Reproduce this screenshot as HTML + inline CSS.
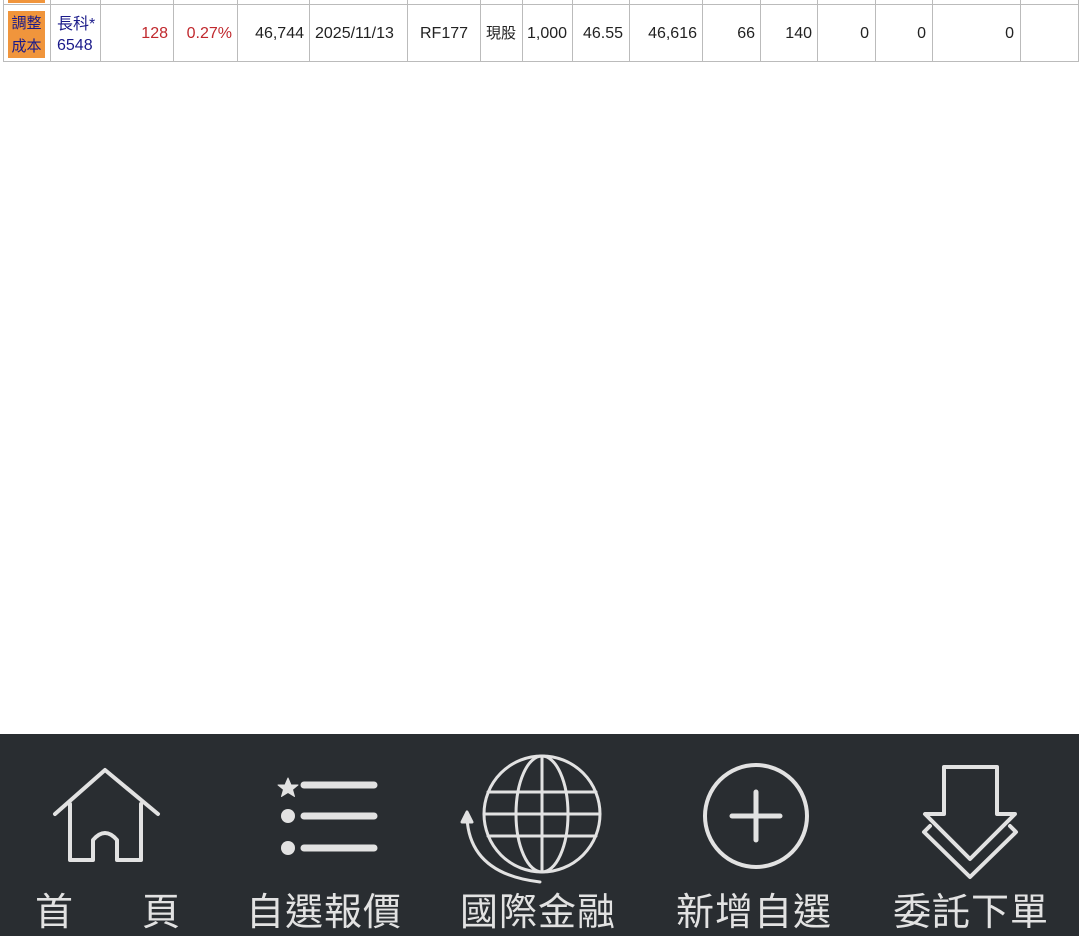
<!DOCTYPE html>
<html><head><meta charset="utf-8"><style>
body{margin:0;width:1079px;height:936px;background:#fff;position:relative;overflow:hidden;font-family:"Liberation Sans","Noto Sans CJK TC",sans-serif}
.v{position:absolute;top:0;height:62px;width:1px;background:#bbb}
.h{position:absolute;left:3px;right:0;height:1px;background:#bbb}
.c{position:absolute;top:25px;font-size:16px;color:#222;text-align:right;line-height:18px}
.nav{position:absolute;left:0;top:734px;width:1079px;height:202px;background:#292d31}
.t{position:absolute;top:886px;font-size:38px;color:#e2e2e2;line-height:46px;letter-spacing:1px;font-family:"Noto Sans CJK TC",sans-serif}
svg{position:absolute}
</style></head><body>
<div class="h" style="top:4px"></div><div class="h" style="top:61px"></div>
<div class="v" style="left:3px"></div><div class="v" style="left:50px"></div><div class="v" style="left:100px"></div><div class="v" style="left:173px"></div><div class="v" style="left:237px"></div><div class="v" style="left:309px"></div><div class="v" style="left:407px"></div><div class="v" style="left:480px"></div><div class="v" style="left:522px"></div><div class="v" style="left:572px"></div><div class="v" style="left:629px"></div><div class="v" style="left:702px"></div><div class="v" style="left:760px"></div><div class="v" style="left:817px"></div><div class="v" style="left:875px"></div><div class="v" style="left:932px"></div><div class="v" style="left:1020px"></div><div class="v" style="left:1078px"></div>
<div style="position:absolute;left:8px;top:0;width:37px;height:3px;background:#f0953c"></div>
<div style="position:absolute;left:8px;top:11px;width:37px;height:47px;background:#f0953c;font-size:15px;color:#1a1a8a;text-align:center;line-height:23px;font-family:'Noto Sans CJK TC',sans-serif">調整<br>成本</div>
<div style="position:absolute;left:57px;top:14px;font-size:16px;color:#1a1a8a;line-height:21px;font-family:'Liberation Sans','Noto Sans CJK TC',sans-serif">長科*<br>6548</div>
<div class="c" style="right:911px;color:#c0282d">128</div>
<div class="c" style="right:847px;color:#c0282d">0.27%</div>
<div class="c" style="right:775px">46,744</div>
<div class="c" style="left:315px">2025/11/13</div>
<div class="c" style="left:420px">RF177</div>
<div class="c" style="left:486px;font-size:15px">現股</div>
<div class="c" style="left:527px">1,000</div>
<div class="c" style="left:583px">46.55</div>
<div class="c" style="right:382px">46,616</div>
<div class="c" style="right:324px">66</div>
<div class="c" style="right:267px">140</div>
<div class="c" style="right:210px">0</div>
<div class="c" style="right:153px">0</div>
<div class="c" style="right:65px">0</div>
<div class="nav"></div>
<svg width="1079" height="202" style="left:0;top:734px" fill="none" stroke="#e2e2e2" stroke-width="4" stroke-linecap="round" stroke-linejoin="round">
<path d="M55 80 L105 36 L158 80"/><path d="M70 70 V126 H93 V106 Q105 92 117 106 V126 H141 V70"/>
<path d="M288 44 l3 7 7 0 -5.5 4.5 2 7 -6.5 -4 -6.5 4 2 -7 -5.5 -4.5 7 0z" fill="#e2e2e2" stroke-width="1"/>
<circle cx="288" cy="82" r="7" fill="#e2e2e2" stroke="none"/><circle cx="288" cy="114" r="7" fill="#e2e2e2" stroke="none"/>
<path d="M304 51 H374 M304 82 H374 M304 114 H374" stroke-width="7"/>
<g stroke-width="3"><circle cx="542" cy="80" r="58"/><ellipse cx="542" cy="80" rx="26" ry="58"/><path d="M542 22 V138 M488 58 H596 M484 80 H600 M488 102 H596"/>
<path d="M467 84 Q470 140 540 148"/><path d="M462 88 L467 78 L472 88z" fill="#e2e2e2"/></g>
<circle cx="756" cy="82" r="51"/><path d="M756 58 V106 M732 82 H780" stroke-width="5"/>
<path d="M944 33 H997 V80 H1015 L970 125 L925 80 H944 Z"/><path d="M930 92 L924 98 L970 143 L1016 98 L1010 92"/>
</svg>
<div class="t" style="left:35px">首</div><div class="t" style="left:142px">頁</div>
<div class="t" style="left:246px">自選報價</div><div class="t" style="left:460px">國際金融</div>
<div class="t" style="left:676px">新增自選</div><div class="t" style="left:893px">委託下單</div>
</body></html>
